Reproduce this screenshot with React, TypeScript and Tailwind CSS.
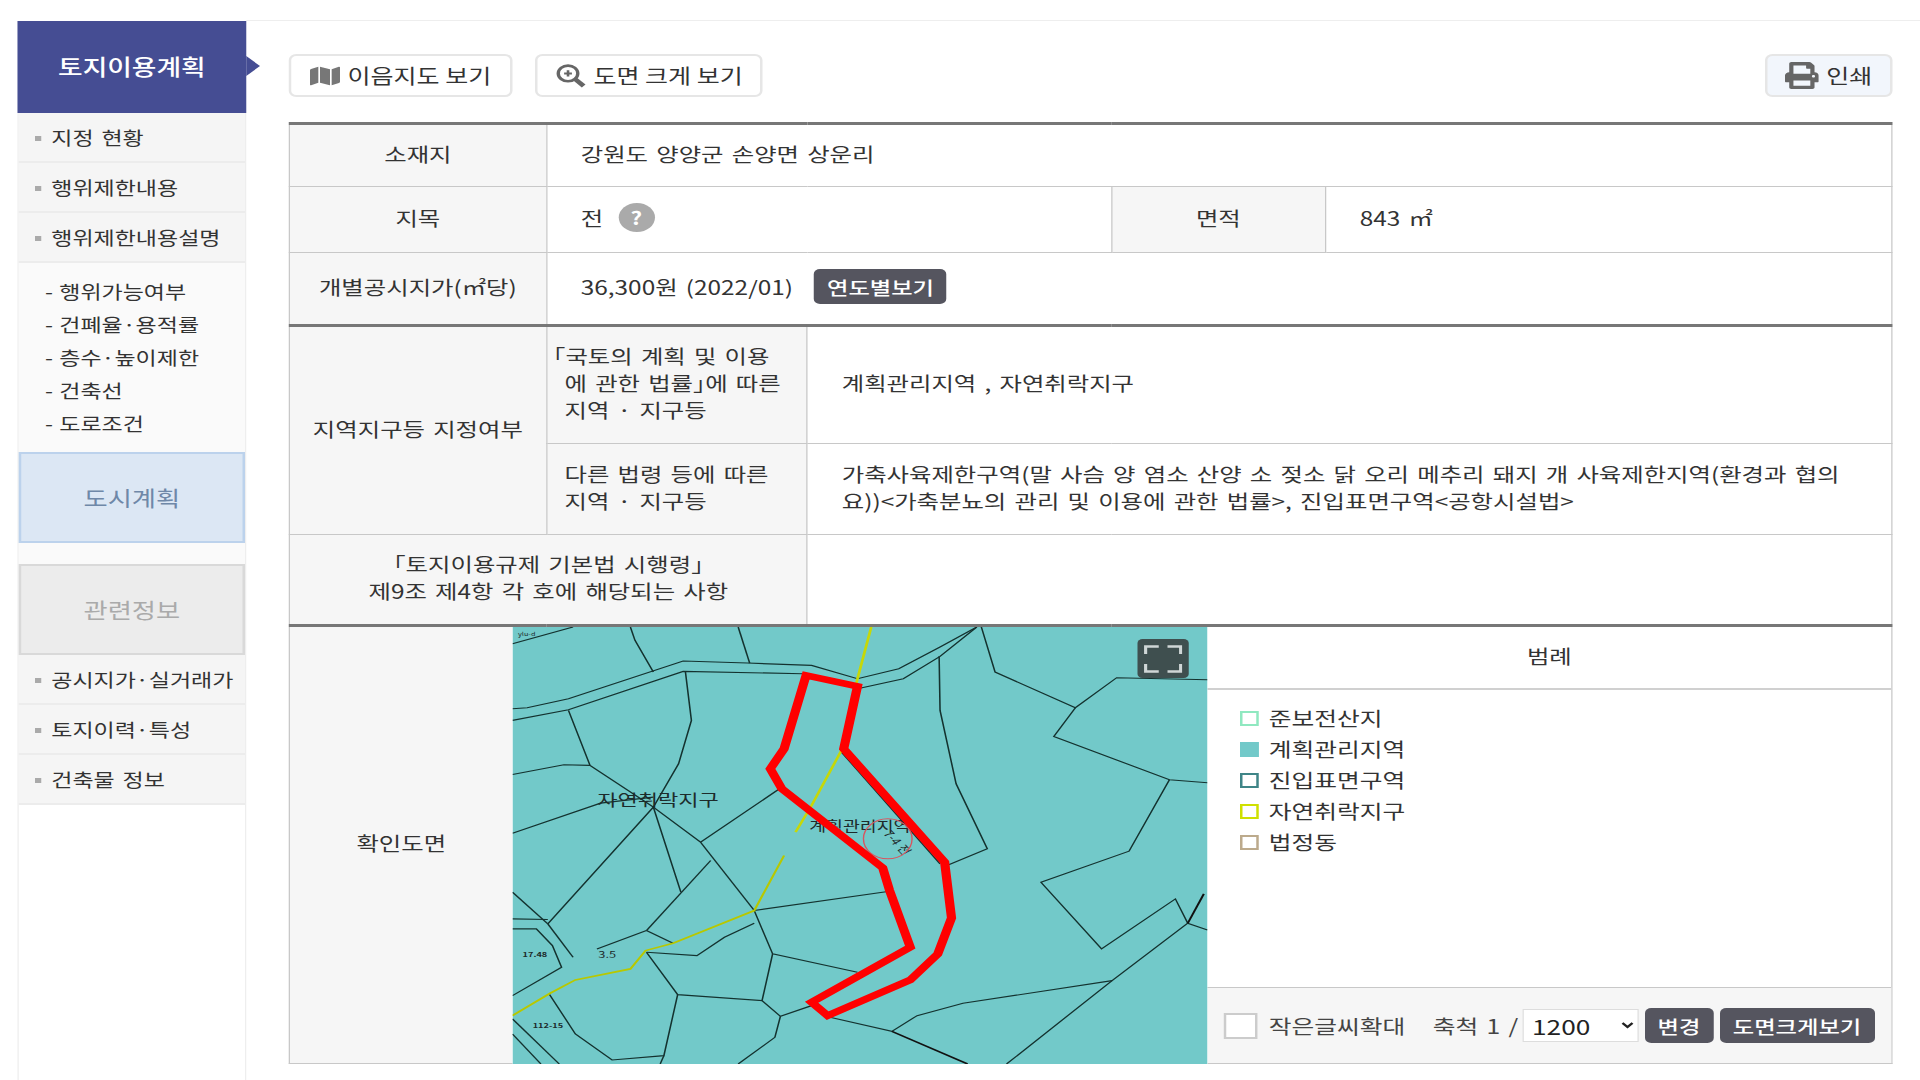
import React from 'react';
import { FaMap, FaPrint } from 'react-icons/fa';

const F = { fontFamily: '"Noto Sans CJK KR","Noto Sans",sans-serif' };

function MenuItem({ label }: { label: string }) {
  return (
    <div className="h-[50px] flex items-center bg-[#f5f5f5] border-b-2 border-[#ececec] pl-[13px] pt-[2px] text-[18.4px] text-[#333]">
      <span className="w-[5px] h-[5px] bg-[#aaa] mr-[8px]" />
      {label}
    </div>
  );
}

function Sidebar() {
  const subs = ['행위가능여부', '건폐율·용적률', '층수·높이제한', '건축선', '도로조건'];
  return (
    <aside className="w-[183px] ml-[14px] mt-[21px] shrink-0 border-x border-[#eeeeee] flex flex-col">
      <div className="relative h-[92px] bg-[#454d93] text-white text-[21.4px] font-medium flex justify-center pt-[29px] -mx-px">
        토지이용계획
        <span className="absolute top-[35px] right-[-11px] w-0 h-0 border-y-[10px] border-y-transparent border-l-[11px] border-l-[#454d93]" />
      </div>
      <MenuItem label="지정 현황" />
      <MenuItem label="행위제한내용" />
      <MenuItem label="행위제한내용설명" />
      <div className="bg-[#fafafa] pt-[12px] pl-[21px] h-[189px] text-[18.4px] leading-[33px] text-[#333]">
        {subs.map((s) => (
          <div key={s} className="flex gap-[5px]">
            <span>-</span>
            <span>{s}</span>
          </div>
        ))}
      </div>
      <div className="bg-[#dce7f4] border-2 border-[#bcd2ec] h-[91px] w-[181px] flex items-center justify-center text-[21px] text-[#6f88a8]">
        도시계획
      </div>
      <div className="bg-[#fafafa] h-[21px]" />
      <div className="bg-[#ececec] border-2 border-[#d9d9d9] h-[91px] w-[181px] flex items-center justify-center text-[21px] text-[#aaaaaa]">
        관련정보
      </div>
      <MenuItem label="공시지가·실거래가" />
      <MenuItem label="토지이력·특성" />
      <MenuItem label="건축물 정보" />
    </aside>
  );
}

function ToolBtn({ children, w, bg }: { children: React.ReactNode; w: string; bg: string }) {
  return (
    <button className={`${w} ${bg} h-[43px] border-2 border-[#e6e6e6] rounded-[6px] flex items-center justify-center gap-[6px] text-[20px] text-[#333]`}>
      {children}
    </button>
  );
}

const th = 'bg-[#f6f6f6] border border-[#c8c8c8] font-normal text-[#333] text-center align-middle pb-[5px]';
const td = 'bg-white border border-[#c8c8c8] text-[#333] pl-[27px] pb-[5px] align-middle whitespace-nowrap';

function InfoTable() {
  return (
    <table className="w-full table-fixed border-collapse border-t-[3px] border-[#777] mt-[25px] text-[19.5px] leading-[27px]">
      <colgroup>
        <col className="w-[205.6px]" />
        <col className="w-[208.8px]" />
        <col className="w-[243.2px]" />
        <col className="w-[171.2px]" />
        <col />
      </colgroup>
      <tbody>
        <tr className="h-[63px]">
          <th className={th}>소재지</th>
          <td className={td} colSpan={4}>강원도 양양군 손양면 상운리</td>
        </tr>
        <tr className="h-[66px]">
          <th className={th}>지목</th>
          <td className={td} colSpan={2}>
            <span className="inline-flex items-center gap-[12px]">
              전
              <span className="w-[29px] h-[29px] rounded-full bg-[#aaaaaa] text-white font-bold text-[18px] flex items-center justify-center">?</span>
            </span>
          </td>
          <th className={th}>면적</th>
          <td className={td}>843 ㎡</td>
        </tr>
        <tr className="h-[73px] border-b-[3px] border-[#777]">
          <th className={th}>개별공시지가(㎡당)</th>
          <td className={td} colSpan={4}>
            <span className="inline-flex items-center gap-[17px]">
              36,300원 (2022/01)
              <span className="bg-[#55555f] text-white font-medium text-[18.6px] rounded-[5px] h-[35px] w-[106px] flex items-center justify-center">연도별보기</span>
            </span>
          </td>
        </tr>
        <tr className="h-[118px]">
          <th className={th} rowSpan={2}>지역지구등 지정여부</th>
          <th className={`${th} text-left pl-[14px] pr-[4px] whitespace-nowrap [font-feature-settings:'halt']`}>
            <span className="-ml-[9px]">「국토의 계획 및 이용</span><br />에 관한 법률」에 따른<br />지역 · 지구등
          </th>
          <td className={td} colSpan={3}>계획관리지역 , 자연취락지구</td>
        </tr>
        <tr className="h-[91px]">
          <th className={`${th} text-left pl-[14px] whitespace-nowrap`}>다른 법령 등에 따른<br />지역 · 지구등</th>
          <td className={td} colSpan={3}>
            가축사육제한구역(말 사슴 양 염소 산양 소 젖소 닭 오리 메추리 돼지 개 사육제한지역(환경과 협의<br />요))&lt;가축분뇨의 관리 및 이용에 관한 법률&gt;, 진입표면구역&lt;공항시설법&gt;
          </td>
        </tr>
        <tr className="h-[91px] border-b-[3px] border-[#777]">
          <th className={th} colSpan={2}>「토지이용규제 기본법 시행령」<br />제9조 제4항 각 호에 해당되는 사항</th>
          <td className={td} colSpan={3}></td>
        </tr>
      </tbody>
    </table>
  );
}

const blackLines = [
  '28,265 60,262 150,235 400,122 540,128 680,135 780,175 870,145 960,80 1040,20',
  '28,300 150,268 400,153 660,160',
  '780,205 880,175 960,108 1040,20',
  '28,70 160,20',
  '285,20 295,60 335,155',
  '520,20 545,128',
  '1050,20 1080,155 1255,262 1345,172 1543,178',
  '1255,262 1208,348 1460,478 1543,487',
  '1460,478 1372,692 1180,785 1312,985 1473,835 1500,908 1543,928',
  '1500,908 1335,1080 1105,1330',
  '1335,1080 1010,1148 910,1185 855,1232 720,1190',
  '958,108 960,270 995,490 1063,685 975,735',
  '405,155 418,300 390,430 335,560 105,910',
  '150,270 197,435 335,560 395,815',
  '28,462 140,433 197,435',
  '28,638 220,548 335,530',
  '610,505 438,665 335,560',
  '438,665 555,870',
  '460,720 320,930',
  '555,870 850,812',
  '555,870 595,1000 780,1055',
  '595,1000 572,1140 388,1122 320,995',
  '572,1140 612,1187 680,1155',
  '612,1187 600,1250 520,1330',
  '388,1122 358,1305 245,1318 165,1240 108,1120',
  '358,1305 350,1330',
  '320,930 378,968',
  '320,930 212,985',
  '320,995 430,1005 490,950 555,908',
  '105,910 160,1010',
  '28,895 105,897',
  '28,925 80,925 115,975 135,1040 28,1125',
  '28,815 105,910',
  '28,1195 130,1330',
  '28,1240 90,1330',
  '745,395 960,730',
];

function MapImage() {
  return (
    <svg className="w-full h-full block" viewBox="28 20 1515 1310" preserveAspectRatio="none">
      <rect x="28" y="20" width="1515" height="1310" fill="#72c9c9" />
      {blackLines.map((p) => (
        <polyline key={p} points={p} fill="none" stroke="#14322f" strokeWidth="3.4" />
      ))}
      <polyline points="855,1232 1020,1330" fill="none" stroke="#111" strokeWidth="4.5" />
      <polyline points="1535,820 1500,908" fill="none" stroke="#111" strokeWidth="4.5" />
      <polyline points="810,20 780,175 745,390 680,555 645,635" fill="none" stroke="#c6d808" strokeWidth="6" />
      <polyline points="620,705 555,870 378,968 318,990 285,1045 165,1078 110,1118 28,1185" fill="none" stroke="#b8c800" strokeWidth="5" />
      <g fill="#1d2b2b" style={F}>
        <text x="345" y="557" textAnchor="middle" fontSize="48">자연취락지구</text>
        <text x="785" y="632" textAnchor="middle" fontSize="40">계획관리지역</text>
        <text x="50" y="1008" fontSize="20" fontWeight="700">17.48</text>
        <text x="72" y="1222" fontSize="20" fontWeight="700">112-15</text>
        <text x="215" y="1012" fontSize="28">3.5</text>
        <text x="40" y="46" fontSize="16">ylu-d</text>
        <text x="835" y="640" fontSize="30" transform="rotate(55 835 640)">7-4 전</text>
      </g>
      <ellipse cx="846" cy="655" rx="53" ry="60" fill="none" stroke="#d9545f" strokeWidth="3" />
      <polygon
        points="668,165 780,198 750,385 970,725 985,892 955,1000 895,1078 715,1185 680,1145 895,980 850,810 835,742 615,505 590,445 620,385"
        fill="none"
        stroke="#ff0000"
        strokeWidth="20"
        strokeLinejoin="miter"
      />
    </svg>
  );
}

function Legend() {
  const items = [
    { t: '준보전산지', c: 'border-[#8fe8c0] bg-white' },
    { t: '계획관리지역', c: 'border-[#72c9c9] bg-[#72c9c9]' },
    { t: '진입표면구역', c: 'border-[#3f8587] bg-white' },
    { t: '자연취락지구', c: 'border-[#cfe000] bg-white' },
    { t: '법정동', c: 'border-[#bcaa8c] bg-white' },
  ];
  return (
    <div className="flex-1 min-w-0 flex flex-col border-r border-[#c8c8c8] border-b">
      <div className="h-[63px] pb-[3px] border-b-2 border-[#d0d0d0] flex items-center justify-center text-[19.5px] text-[#333]">범례</div>
      <div className="flex-1 pl-[26px] pt-[13px] flex flex-col text-[19.8px] text-[#333]">
        {items.map((i) => (
          <div key={i.t} className="h-[31px] flex items-center gap-[8px]">
            <span className={`w-[15px] h-[15px] border-2 ${i.c}`} />
            <span className="pb-[1px]">{i.t}</span>
          </div>
        ))}
      </div>
      <div className="h-[76px] bg-[#f6f6f6] border-t border-[#c8c8c8] flex items-center pl-[13px] text-[19.8px] text-[#444]">
        <span className="w-[27px] h-[26px] bg-white border-2 border-[#ccc] mr-[9px]" />
        <span className="mr-[22px]">작은글씨확대</span>
        <span className="mr-[3px]">축척 1 /</span>
        <select className="w-[93px] h-[33px] bg-white border border-[#ddd] pl-[3px] text-[21px] text-[#222]" defaultValue="1200">
          <option>1200</option>
        </select>
        <button className="ml-[5px] w-[55px] h-[35px] bg-[#55555f] rounded-[5px] text-white text-[18.6px] font-medium">변경</button>
        <button className="ml-[5px] w-[124px] h-[35px] bg-[#55555f] rounded-[5px] text-white text-[18.6px] font-medium">도면크게보기</button>
      </div>
    </div>
  );
}

function MapRow() {
  return (
    <div className="flex h-[437px]">
      <div className="w-[179px] shrink-0 bg-[#f6f6f6] border-l border-b border-[#c8c8c8] pb-[4px] flex items-center justify-center text-[19.5px] text-[#333]">확인도면</div>
      <div className="relative w-[556px] shrink-0">
        <MapImage />
        <div className="absolute top-[12px] right-[15px] w-[41px] h-[39px] rounded-[4px] bg-[#3f4f4f] flex items-center justify-center">
          <svg width="31" height="28" viewBox="0 0 31 28" fill="none" stroke="#cfd6d6" strokeWidth="2.5">
            <path d="M1.5 9V1.5H12M19 1.5H29.5V9M29.5 19V26.5H19M12 26.5H1.5V19" />
          </svg>
        </div>
      </div>
      <Legend />
    </div>
  );
}

export default function App() {
  return (
    <div className="w-[1536px] h-[1080px] overflow-hidden origin-top-left scale-x-[1.25] bg-white flex [word-spacing:2.2px]" style={F}>
      <Sidebar />
      <main className="flex-1 min-w-0 mt-[20px] border-t border-[#eeeeee] pt-[33px] pl-[34px] pr-[22px]">
        <div className="flex justify-between">
          <div className="flex gap-[18px]">
            <ToolBtn w="w-[179px]" bg="bg-white">
              <FaMap className="text-[#777] text-[24px]" />이음지도 보기
            </ToolBtn>
            <ToolBtn w="w-[182px]" bg="bg-white">
              <svg width="25" height="25" viewBox="0 0 24 24" fill="none" stroke="#666" strokeWidth="2.6">
                <circle cx="10" cy="10" r="7.5" />
                <path d="M15.5 15.5 22 22" strokeWidth="4" />
                <path d="M10 7v6M7 10h6" strokeWidth="2" />
              </svg>
              도면 크게 보기
            </ToolBtn>
          </div>
          <ToolBtn w="w-[102px]" bg="bg-[#f2f6fc]">
            <FaPrint className="text-[#666] text-[27px]" />인쇄
          </ToolBtn>
        </div>
        <InfoTable />
        <MapRow />
      </main>
    </div>
  );
}
